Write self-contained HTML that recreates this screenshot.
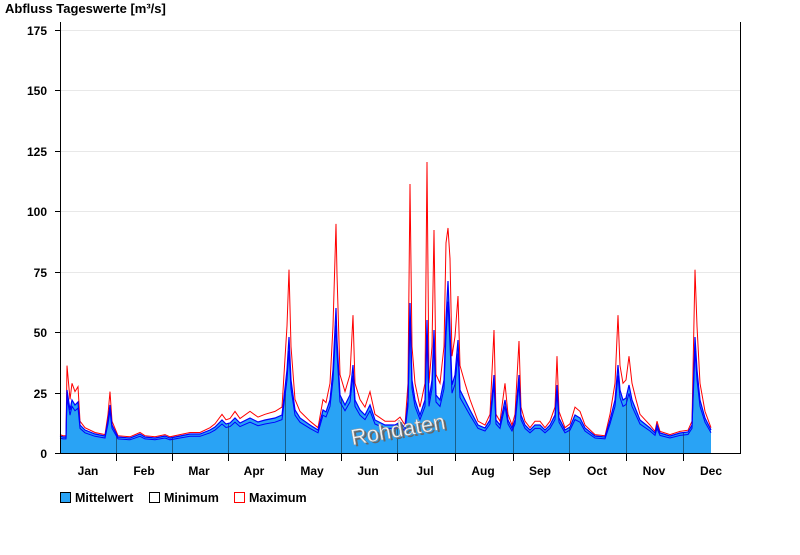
<!DOCTYPE html>
<html><head><meta charset="utf-8"><style>
body{margin:0;background:#fff;width:800px;height:550px;overflow:hidden;font-family:"Liberation Sans",Arial,sans-serif}
svg text{font-family:"Liberation Sans",Arial,sans-serif;font-weight:bold;font-size:12px;fill:#000}
</style></head><body>
<svg id="s" width="800" height="550" xmlns="http://www.w3.org/2000/svg">
<text x="5" y="13" style="font-size:13px">Abfluss Tageswerte [m³/s]</text>
<g stroke="#e8e8e8" stroke-width="1">
<line x1="61" x2="740" y1="30.5" y2="30.5"/><line x1="61" x2="740" y1="90.5" y2="90.5"/>
<line x1="61" x2="740" y1="151.5" y2="151.5"/><line x1="61" x2="740" y1="211.5" y2="211.5"/>
<line x1="61" x2="740" y1="272.5" y2="272.5"/><line x1="61" x2="740" y1="332.5" y2="332.5"/>
<line x1="61" x2="740" y1="393.5" y2="393.5"/>
</g>
<defs><clipPath id="cp"><polygon id="cpp" points="0,0"/></clipPath></defs>
<g id="data"></g>
<g stroke="#000" stroke-width="1">
<line x1="60.5" x2="60.5" y1="22" y2="454"/><line x1="740.5" x2="740.5" y1="22" y2="454"/>
<line x1="60" x2="741" y1="453.5" y2="453.5"/>
<line x1="55" x2="60" y1="30.5" y2="30.5"/><line x1="55" x2="60" y1="90.5" y2="90.5"/>
<line x1="55" x2="60" y1="151.5" y2="151.5"/><line x1="55" x2="60" y1="211.5" y2="211.5"/>
<line x1="55" x2="60" y1="272.5" y2="272.5"/><line x1="55" x2="60" y1="332.5" y2="332.5"/>
<line x1="55" x2="60" y1="393.5" y2="393.5"/><line x1="55" x2="60" y1="453.5" y2="453.5"/>
<line x1="116.5" x2="116.5" y1="453" y2="461"/><line x1="172.5" x2="172.5" y1="453" y2="461"/>
<line x1="228.5" x2="228.5" y1="453" y2="461"/><line x1="285.5" x2="285.5" y1="453" y2="461"/>
<line x1="341.5" x2="341.5" y1="453" y2="461"/><line x1="397.5" x2="397.5" y1="453" y2="461"/>
<line x1="455.5" x2="455.5" y1="453" y2="461"/><line x1="513.5" x2="513.5" y1="453" y2="461"/>
<line x1="569.5" x2="569.5" y1="453" y2="461"/><line x1="626.5" x2="626.5" y1="453" y2="461"/>
<line x1="683.5" x2="683.5" y1="453" y2="461"/>
</g>
<g text-anchor="end">
<text x="47" y="35">175</text><text x="47" y="95">150</text><text x="47" y="156">125</text>
<text x="47" y="216">100</text><text x="47" y="277">75</text><text x="47" y="337">50</text>
<text x="47" y="398">25</text><text x="47" y="458">0</text>
</g>
<g text-anchor="middle">
<text x="88" y="475">Jan</text><text x="144" y="475">Feb</text><text x="199" y="475">Mar</text>
<text x="254" y="475">Apr</text><text x="312" y="475">May</text><text x="368" y="475">Jun</text>
<text x="425" y="475">Jul</text><text x="483" y="475">Aug</text><text x="540" y="475">Sep</text>
<text x="597" y="475">Oct</text><text x="654" y="475">Nov</text><text x="711" y="475">Dec</text>
</g>
<text x="400" y="439" text-anchor="middle" transform="rotate(-10 398 430)" style="font-size:22px;font-weight:normal;fill:#666">Rohdaten</text>
<text x="398" y="437" text-anchor="middle" transform="rotate(-10 398 430)" style="font-size:22px;font-weight:normal;fill:#f4f4f4;stroke:#999;stroke-width:0.5px">Rohdaten</text>
<rect x="60.5" y="492.5" width="10" height="10" fill="#29a3f5" stroke="#000"/>
<text x="75" y="502" style="font-size:12.5px">Mittelwert</text>
<rect x="149.5" y="492.5" width="10" height="10" fill="#fff" stroke="#000"/>
<text x="164" y="502" style="font-size:12.5px">Minimum</text>
<rect x="234.5" y="492.5" width="10" height="10" fill="#fff" stroke="#f00"/>
<text x="249" y="502" style="font-size:12.5px">Maximum</text>
</svg>
<script>
var p=[60,436,63,437,66,437,67,390,70,410,72,400,75,405,78,402,80,425,85,430,95,434,105,436,108,420,110,405,112,425,118,437,130,438,140,434,145,437,155,438,165,436,170,438,180,436,190,434,200,434,210,430,215,427,222,420,226,424,230,423,235,418,240,423,250,418,258,422,265,420,275,418,282,415,287,370,289,337,291,380,295,410,300,418,310,425,318,430,323,410,326,412,330,400,333,370,336,308,337,340,340,395,345,405,350,395,353,365,355,400,360,410,365,415,370,405,375,420,385,425,395,425,400,422,405,428,408,400,410,303,412,380,415,400,420,415,425,400,427,320,429,400,432,380,434,330,436,395,440,400,444,380,446,320,448,281,450,330,452,385,455,375,458,340,460,390,465,400,470,410,478,425,485,428,490,420,494,375,496,420,500,425,505,400,508,420,512,428,515,420,519,375,521,415,525,425,530,430,535,425,540,425,545,430,550,425,555,415,557,385,559,418,565,430,570,427,575,415,580,418,585,428,595,436,605,437,610,420,615,400,618,365,620,390,623,400,626,398,629,385,632,400,636,410,640,420,650,428,655,433,657,425,660,433,670,436,680,433,688,432,692,425,695,337,697,370,700,400,705,418,711,430];
var over={410:184,427:162,434:230,448:228,458:296,494:330,519:341};
var ptsM=[],ptsR=[],ptsN=[];
for(var i=0;i<p.length;i+=2){var x=p[i],y=p[i+1],h=453-y;
var k=1.08+0.5*Math.min(1,Math.max(0,h-20)/70);
var ry=over[x]!==undefined?over[x]:(453-h*k);
ptsM.push(x+','+y);ptsR.push(x+','+ry.toFixed(1));ptsN.push(x+','+(453-h*0.88).toFixed(1));}
var g=document.getElementById('data');
var ns='http://www.w3.org/2000/svg';
function pl(pts,attrs){var e=document.createElementNS(ns,'polyline');e.setAttribute('points',pts.join(' '));for(var a in attrs)e.setAttribute(a,attrs[a]);g.appendChild(e);}
var polyPts=ptsM.join(' ')+' 711,453 60,453';
document.getElementById('cpp').setAttribute('points',polyPts);
var poly=document.createElementNS(ns,'polygon');poly.setAttribute('points',polyPts);poly.setAttribute('fill','#29a3f5');g.appendChild(poly);
var lg=document.createElementNS(ns,'g');lg.setAttribute('clip-path','url(#cp)');g.appendChild(lg);
[116,172,228,285,341,397,455,513,569,626,683].forEach(function(x){var l=document.createElementNS(ns,'line');l.setAttribute('x1',x+.5);l.setAttribute('x2',x+.5);l.setAttribute('y1',200);l.setAttribute('y2',453);l.setAttribute('stroke','#1a5f8a');lg.appendChild(l);});
pl(ptsR,{fill:'none',stroke:'#f00','stroke-width':1});
pl(ptsM,{fill:'none',stroke:'#00f','stroke-width':1.2});
pl(ptsN,{fill:'none',stroke:'#00f','stroke-width':1});
</script>
</body></html>
